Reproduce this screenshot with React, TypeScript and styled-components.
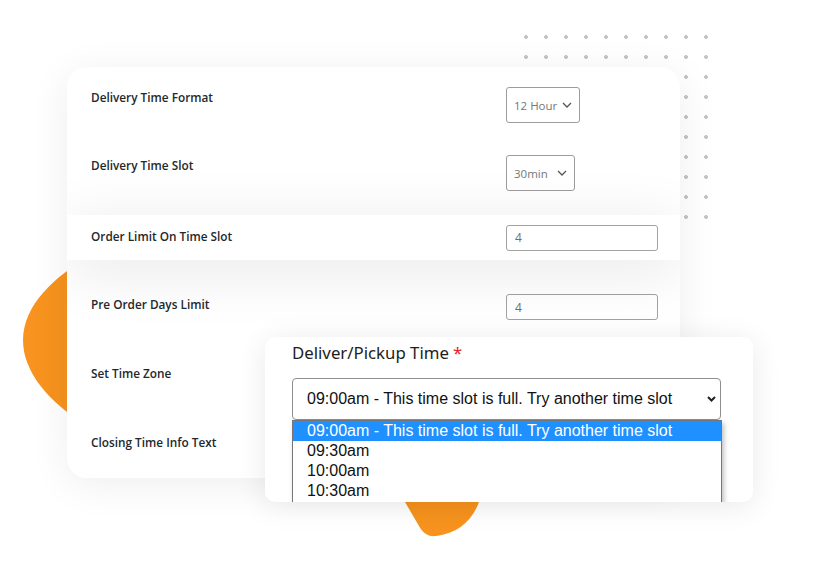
import React from 'react';
import styled, { createGlobalStyle } from 'styled-components';

const GlobalStyle = createGlobalStyle`
  html, body {
    margin: 0;
    padding: 0;
    background: #ffffff;
  }
  body {
    width: 822px;
    height: 570px;
    overflow: hidden;
    font-family: 'Open Sans', 'Noto Sans', sans-serif;
  }
`;

const Page = styled('div')`
  position: relative;
  width: 822px;
  height: 570px;
  padding: 67px 0 0 67px;
  box-sizing: border-box;
`;

const Dots = styled('div')`
  position: absolute;
  left: 516px;
  top: 27px;
  width: 200px;
  height: 200px;
  background-image: radial-gradient(circle, #c4c4c4 1.7px, transparent 2.2px);
  background-size: 20px 20px;
  z-index: 0;
`;

const Blobs = styled('svg')`
  position: absolute;
  left: 0;
  top: 0;
  z-index: 0;
`;

const SettingsCard = styled('div')`
  position: relative;
  z-index: 1;
  width: 613px;
  height: 411px;
  background: #ffffff;
  border-radius: 20px;
  box-shadow: 0 6px 40px rgba(0, 0, 0, 0.07);
  overflow: hidden;
  padding-top: 20px;
  box-sizing: border-box;
`;

const Row = styled('div')<{ $h: number; $mt?: number }>`
  display: grid;
  grid-template-columns: 415px auto;
  align-items: start;
  padding-left: 24px;
  height: ${(p) => p.$h}px;
  margin-top: ${(p) => p.$mt || 0}px;
`;

const BandRow = styled(Row)`
  position: relative;
  align-items: center;
  background: #ffffff;
  box-shadow: 0 10px 60px rgba(0, 0, 0, 0.1);
`;

const Label = styled('div')`
  font-size: 11.8px;
  font-weight: 600;
  line-height: 16px;
  color: #23282d;
  padding-top: 2px;
`;

const BandLabel = styled(Label)`
  padding-top: 0;
  margin-top: -3px;
`;

const SmallSelect = styled('div')<{ $w: number }>`
  display: flex;
  align-items: center;
  justify-content: space-between;
  width: ${(p) => p.$w}px;
  height: 36px;
  box-sizing: border-box;
  border: 1px solid #9c9c9c;
  border-radius: 3px;
  padding: 0 7px 0 7px;
  font-size: 11.5px;
  color: #777777;
  background: #ffffff;
`;

const TextInput = styled('input')`
  width: 152px;
  height: 26px;
  box-sizing: border-box;
  border: 1px solid #a2a2a2;
  border-radius: 3px;
  padding: 0 8px;
  font-family: 'Open Sans', sans-serif;
  font-size: 12px;
  color: #6f6f6f;
  background: #ffffff;
  outline: none;
`;

const PopCard = styled('div')`
  position: absolute;
  z-index: 2;
  left: 265px;
  top: 337px;
  width: 488px;
  height: 165px;
  box-sizing: border-box;
  padding: 4px 32px 0 27px;
  background: #ffffff;
  border-radius: 10px;
  box-shadow: 0 4px 30px rgba(0, 0, 0, 0.09);
  overflow: hidden;
`;

const FieldLabel = styled('div')`
  font-family: 'Noto Sans', sans-serif;
  font-size: 16.8px;
  line-height: 24px;
  color: #1d1d1d;
`;

const Req = styled('span')`
  color: #e2231a;
  margin-left: 4px;
`;

const TimeSelect = styled('div')`
  margin-top: 13px;
  height: 42px;
  box-sizing: border-box;
  border: 1px solid #8e8e8e;
  border-radius: 4px;
  display: flex;
  align-items: center;
  justify-content: space-between;
  padding: 0 4px 0 14px;
  font-family: 'Liberation Sans', Arial, sans-serif;
  font-size: 16px;
  color: #111111;
`;

const OptionList = styled('div')`
  width: 430px;
  height: 110px;
  box-sizing: border-box;
  border: 1px solid #767676;
  background: #ffffff;
  box-shadow: 2px 3px 5px rgba(0, 0, 0, 0.25);
`;

const Option = styled('div')<{ $active?: boolean }>`
  height: 20px;
  line-height: 20px;
  padding-left: 14px;
  font-family: 'Liberation Sans', Arial, sans-serif;
  font-size: 16px;
  color: ${(p) => (p.$active ? '#ffffff' : '#111111')};
  background: ${(p) => (p.$active ? '#1e90ff' : 'transparent')};
  white-space: nowrap;
`;

const Chevron = ({ bold }: { bold?: boolean }) =>
  bold ? (
    <svg width="9" height="6" viewBox="0 0 9 6">
      <path d="M1 1 L4.5 4.5 L8 1" fill="none" stroke="#222" strokeWidth="2" />
    </svg>
  ) : (
    <svg width="10" height="6" viewBox="0 0 10 6">
      <path d="M1 1 L5 5 L9 1" fill="none" stroke="#555" strokeWidth="1.3" />
    </svg>
  );

const slots = ['09:30am', '10:00am', '10:30am'];

export default function App() {
  const full = '09:00am - This time slot is full. Try another time slot';
  return (
    <>
      <GlobalStyle />
      <Page>
        <Dots />
        <Blobs width="822" height="570" viewBox="0 0 822 570">
          <path
            d="M90 256 C55 276 23 305 23 340 C23 372 48 402 90 428 Z"
            fill="#f7931e"
          />
          <path
            d="M398 490 L482 490 C478 515 462 533 436 536 C428 537 423 533 419 526 Z"
            fill="#f7931e"
          />
        </Blobs>

        <SettingsCard>
          <Row $h={68}>
            <Label>Delivery Time Format</Label>
            <SmallSelect $w={74}>
              <span>12 Hour</span>
              <Chevron />
            </SmallSelect>
          </Row>
          <Row $h={60}>
            <Label>Delivery Time Slot</Label>
            <SmallSelect $w={69}>
              <span>30min</span>
              <Chevron />
            </SmallSelect>
          </Row>
          <BandRow $h={45}>
            <BandLabel>Order Limit On Time Slot</BandLabel>
            <TextInput defaultValue="4" readOnly />
          </BandRow>
          <Row $h={69} $mt={34}>
            <Label>Pre Order Days Limit</Label>
            <TextInput defaultValue="4" readOnly />
          </Row>
          <Row $h={69}>
            <Label>Set Time Zone</Label>
          </Row>
          <Row $h={69}>
            <Label>Closing Time Info Text</Label>
          </Row>
        </SettingsCard>

        <PopCard>
          <FieldLabel>
            Deliver/Pickup Time<Req>*</Req>
          </FieldLabel>
          <TimeSelect>
            <span>{full}</span>
            <Chevron bold />
          </TimeSelect>
          <OptionList>
            <Option $active>{full}</Option>
            {slots.map((s) => (
              <Option key={s}>{s}</Option>
            ))}
          </OptionList>
        </PopCard>
      </Page>
    </>
  );
}
